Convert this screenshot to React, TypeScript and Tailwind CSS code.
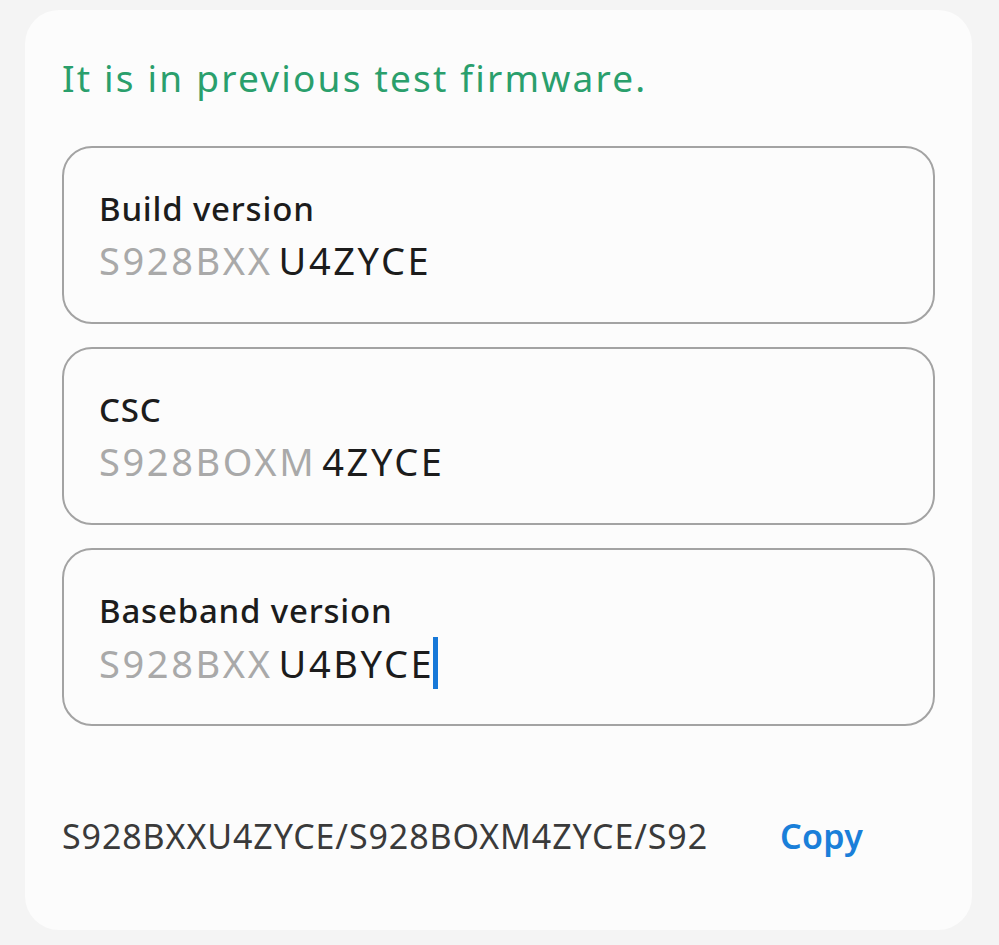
import React from "react";

const font = { fontFamily: '"Noto Sans", "Open Sans", Roboto, sans-serif' };

function Field({
  label,
  prefix,
  suffix,
  caret,
}: {
  label: string;
  prefix: string;
  suffix: string;
  caret?: boolean;
}) {
  return (
    <div className="flex h-[178px] flex-col rounded-[30px] border-2 border-[#a3a3a3] pl-[35px] pt-[39px]">
      <div className="text-[33px] font-medium leading-[44px] tracking-[0.8px] text-[#1c1c1c]">{label}</div>
      <div className="mt-[4px] flex items-center text-[38px] leading-[50px] tracking-[2.6px]">
        <span className="text-[#a9a9a9]">{prefix}</span>
        <span className="ml-[6px] text-[#1c1c1c]">{suffix}</span>
        {caret && <span className="-ml-[1px] h-[52px] w-[5px] bg-[#1778d8]" />}
      </div>
    </div>
  );
}

export default function App() {
  return (
    <div className="min-h-[945px] w-[999px] bg-[#f4f4f4] pt-[10px] pl-[25px]" style={font}>
      <div className="h-[920px] w-[947px] rounded-[34px] bg-[#fcfcfc] px-[37px] pt-[45px]">
        <div className="text-[37px] leading-[46px] tracking-[2.2px] text-[#2a9f6c]">
          It is in previous test firmware.
        </div>
        <div className="mt-[45px] flex w-[873px] flex-col gap-[23px]">
          <Field label="Build version" prefix="S928BXX" suffix="U4ZYCE" />
          <Field label="CSC" prefix="S928BOXM" suffix="4ZYCE" />
          <Field label="Baseband version" prefix="S928BXX" suffix="U4BYCE" caret />
        </div>
        <div className="mt-[88px] flex items-center">
          <span className="text-[34px] leading-[44px] tracking-[0.9px] text-[#3a3a3a]">
            S928BXXU4ZYCE/S928BOXM4ZYCE/S92
          </span>
          <span className="ml-[72px] text-[34px] font-semibold leading-[44px] tracking-[0.3px] text-[#1a7fd9]">
            Copy
          </span>
        </div>
      </div>
    </div>
  );
}
